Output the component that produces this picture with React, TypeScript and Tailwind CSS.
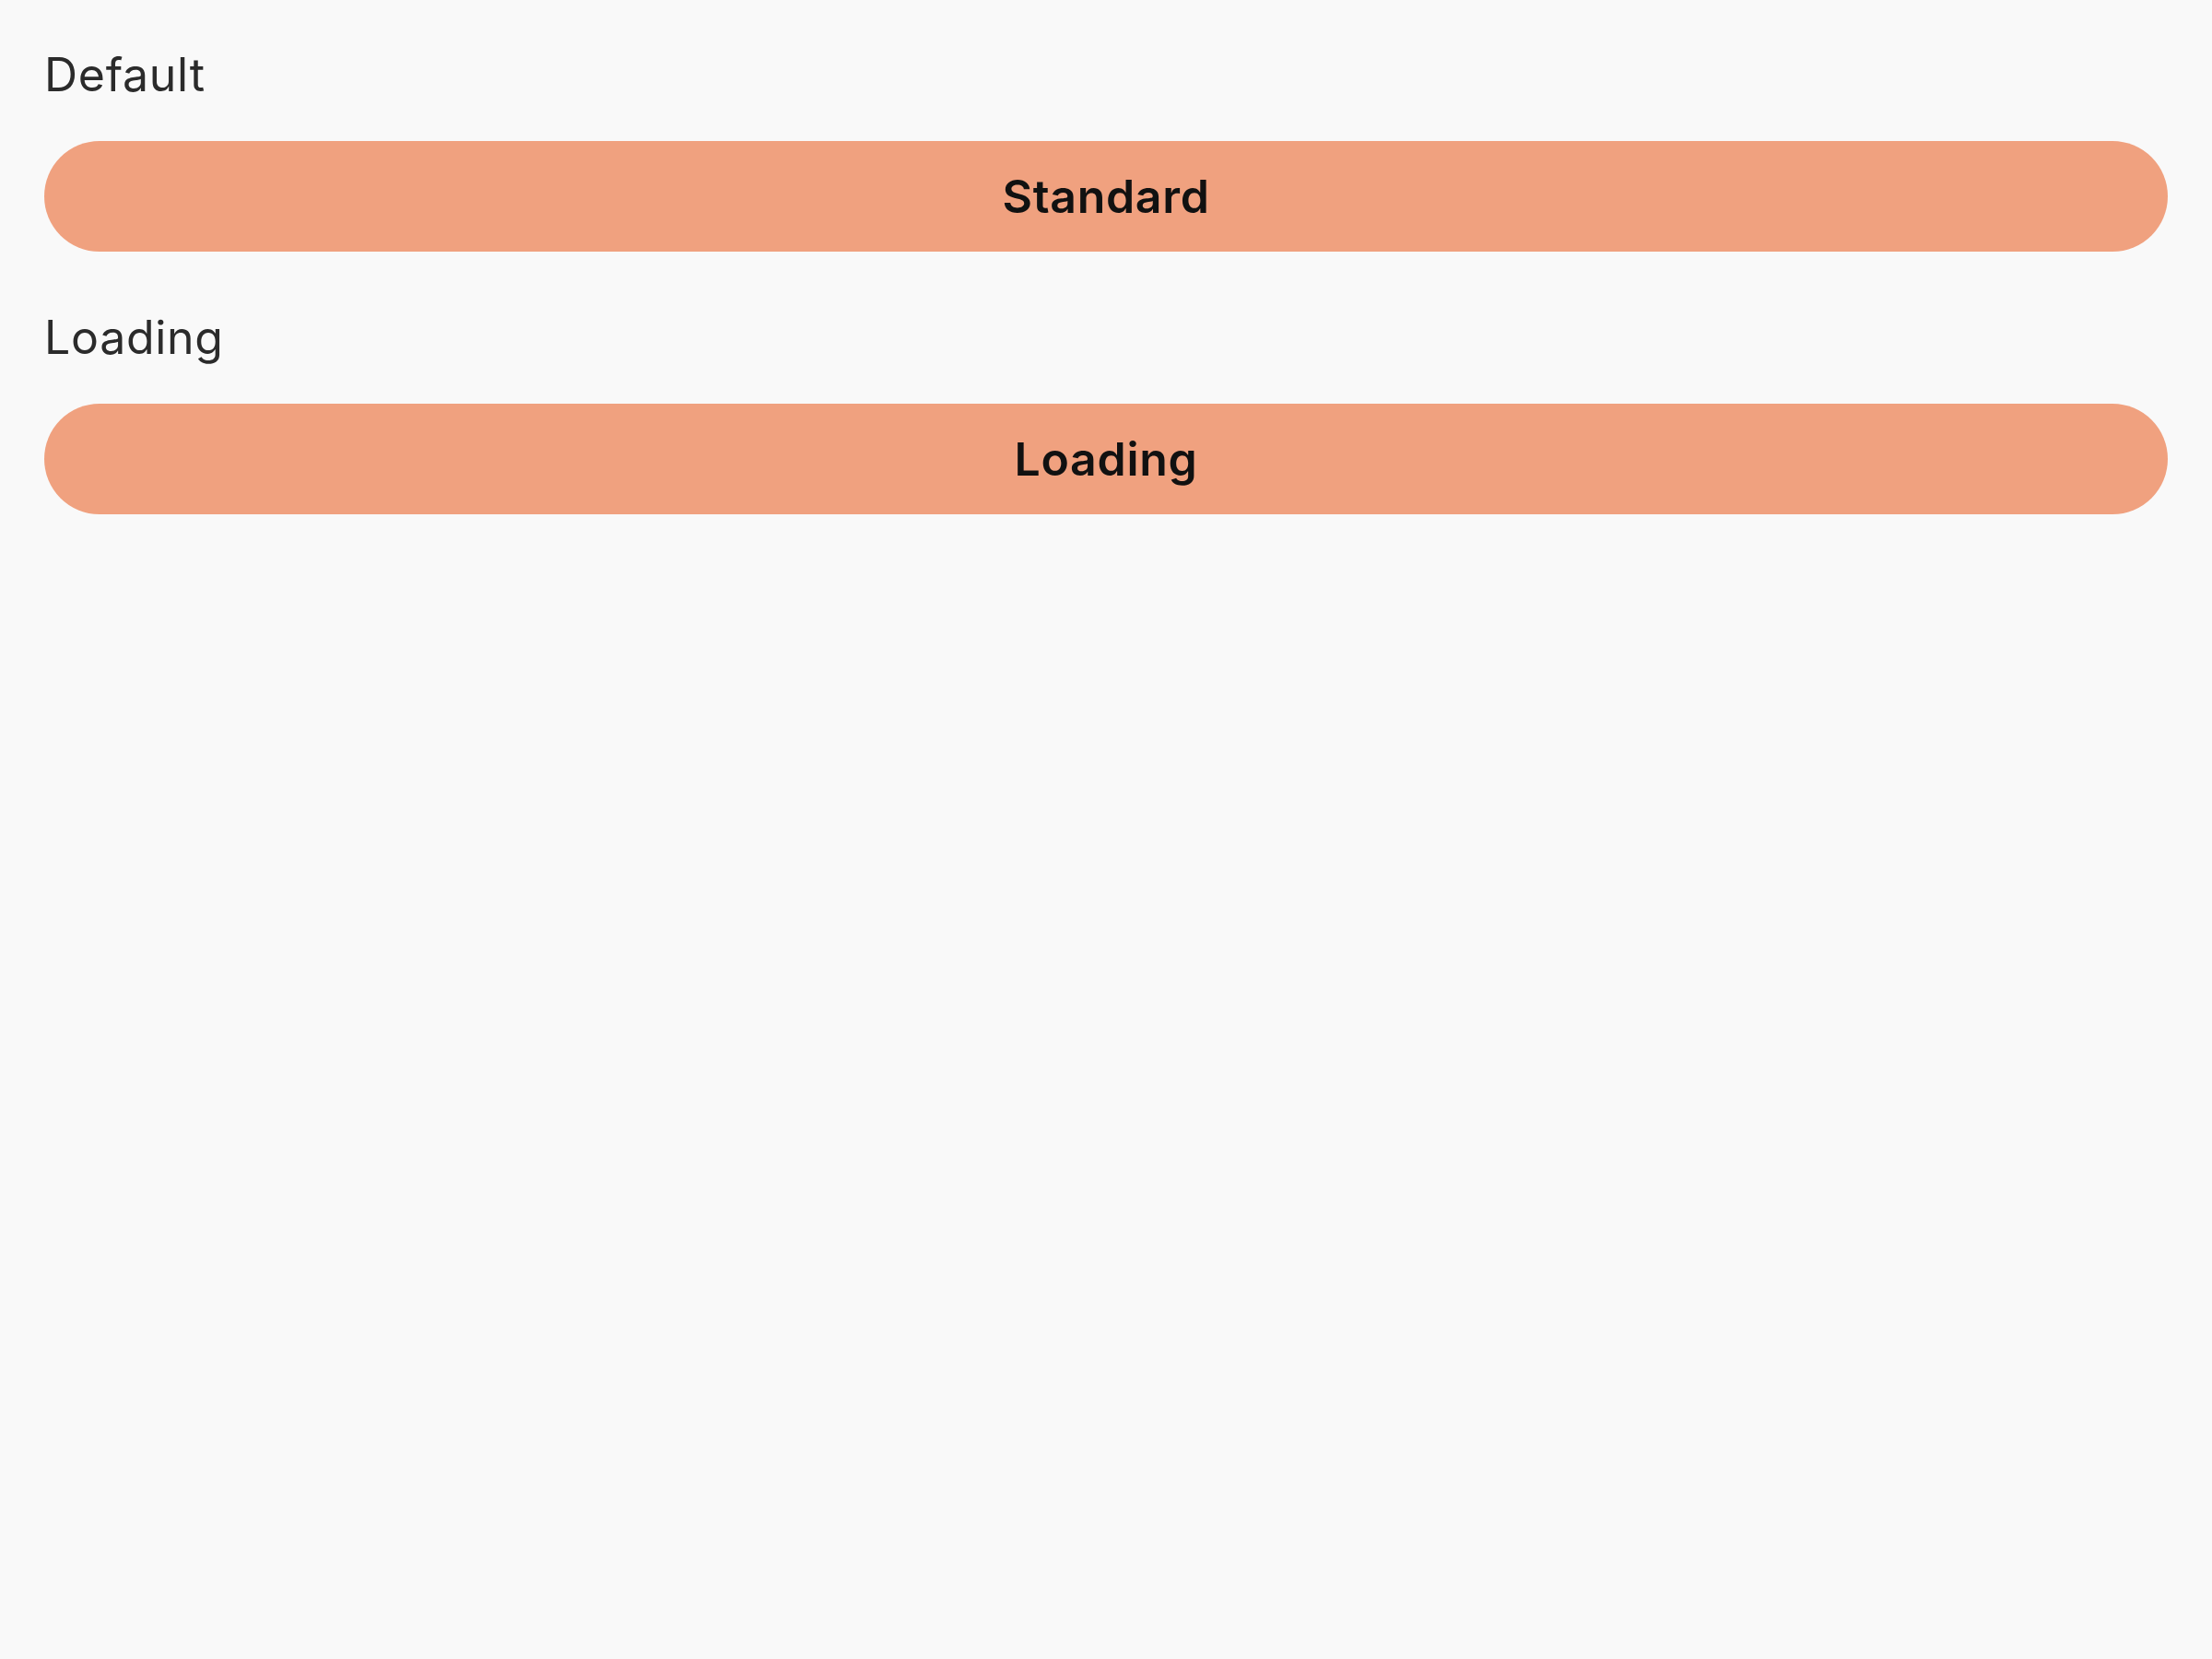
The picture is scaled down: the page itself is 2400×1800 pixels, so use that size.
export default function App() {
  return (
    <div className="min-h-screen bg-[#f9f9f9] px-12 pt-[45px] pb-12 font-['Inter',sans-serif]">
      <section>
        <p className="text-[50px] leading-[72px] tracking-[0.7px] text-[#2b2b2b]">Default</p>
        <button
          type="button"
          className="mt-[36px] flex h-[120px] w-full items-center justify-center rounded-full bg-[#f0a17f] text-[50px] font-semibold tracking-[0.7px] text-[#111111]"
        >
          Standard
        </button>
      </section>

      <section className="mt-[57px]">
        <p className="text-[50px] leading-[72px] tracking-[0.7px] text-[#2b2b2b]">Loading</p>
        <button
          type="button"
          className="mt-[36px] flex h-[120px] w-full items-center justify-center rounded-full bg-[#f0a17f] text-[50px] font-semibold tracking-[0.7px] text-[#111111]"
        >
          Loading
        </button>
      </section>
    </div>
  )
}
